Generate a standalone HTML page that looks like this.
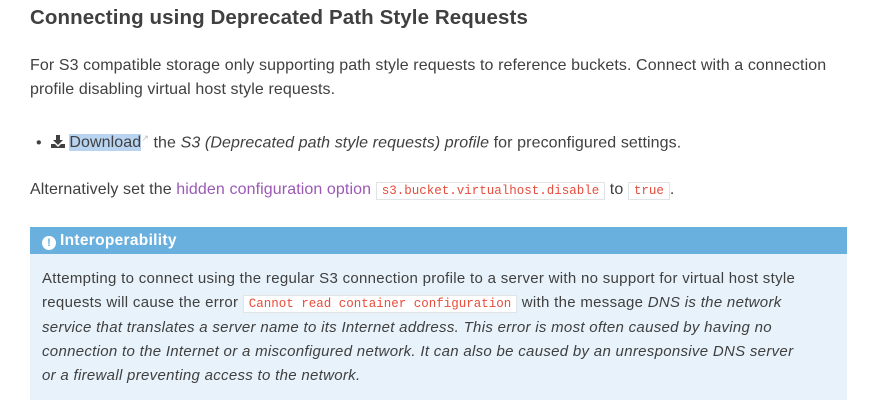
<!DOCTYPE html>
<html><head><meta charset="utf-8"><style>
body{margin:0;background:#fff;width:891px;height:418px;overflow:hidden;font-family:"Liberation Sans",sans-serif;color:#404040;}
.c{position:absolute;left:30px;}
h2{position:absolute;left:30px;top:6px;margin:0;font-size:20.5px;font-weight:bold;color:#404040;letter-spacing:0.1px}
p{margin:0;font-size:16px;line-height:24px;letter-spacing:0.1px;white-space:nowrap}
code{font-family:"Liberation Mono",monospace;font-size:12.5px;color:#e74c3c;background:#fff;border:1px solid #e1e4e5;padding:1px 5px;letter-spacing:0}
a{color:#9b59b6;text-decoration:none}
.box{position:absolute;left:30px;top:227px;width:817px;height:173px;background:#e7f2fa}
.bh{background:#6ab0de;color:#fff;font-weight:bold;font-size:15.5px;height:27px;line-height:27px;padding-left:12px;letter-spacing:0.3px}
.bb{padding:13px 12px 0;font-size:15px;line-height:24px;letter-spacing:0.3px;white-space:nowrap}
.ic{display:inline-block;width:14px;height:14px;border-radius:50%;background:#fff;color:#6ab0de;font-size:11px;line-height:14px;text-align:center;vertical-align:-1px;margin-right:4px;letter-spacing:0}
</style></head><body>
<h2>Connecting using Deprecated Path Style Requests</h2>
<p class="c" style="top:54px">For S3 compatible storage only supporting path style requests to reference buckets. Connect with a connection<br>profile disabling virtual host style requests.</p>
<p class="c" style="top:126px;left:36px">•&nbsp;&nbsp;<svg width="14" height="13" viewBox="0 0 14 13" style="vertical-align:-1px"><path d="M5 0h4v5h3l-5 5-5-5h3z M0 9h4l3 3 3-3h4v4H0z" fill="#404040"/></svg> <span style="background:#b9d4f0">Download</span><sup style="font-size:9px;color:#bbb">↗</sup> the <i>S3 (Deprecated path style requests) profile</i> for preconfigured settings.</p>
<p class="c" style="top:178px">Alternatively set the <a>hidden configuration option</a> <code>s3.bucket.virtualhost.disable</code> to <code>true</code>.</p>
<div class="box"><div class="bh"><span class="ic">!</span>Interoperability</div>
<div class="bb">Attempting to connect using the regular S3 connection profile to a server with no support for virtual host style<br>requests will cause the error <code>Cannot read container configuration</code> with the message <i>DNS is the network</i><br><i>service that translates a server name to its Internet address. This error is most often caused by having no</i><br><i>connection to the Internet or a misconfigured network. It can also be caused by an unresponsive DNS server</i><br><i>or a firewall preventing access to the network.</i></div></div>
</body></html>
